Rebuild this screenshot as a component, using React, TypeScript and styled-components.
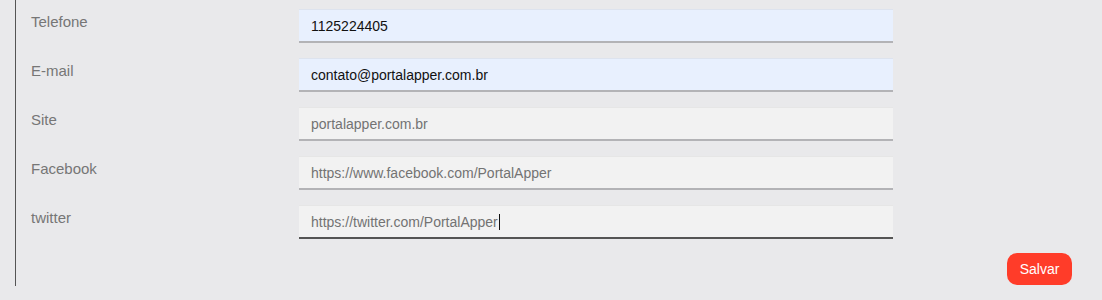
import styled, { createGlobalStyle } from "styled-components";

const GlobalStyle = createGlobalStyle`
  html, body {
    margin: 0;
    padding: 0;
    background: #e9e9eb;
    font-family: "Liberation Sans", Arial, sans-serif;
  }
`;

type Field = {
  label: string;
  value: string;
  autofill?: boolean;
  focused?: boolean;
};

const fields: Field[] = [
  { label: "Telefone", value: "1125224405", autofill: true },
  { label: "E-mail", value: "contato@portalapper.com.br", autofill: true },
  { label: "Site", value: "portalapper.com.br" },
  { label: "Facebook", value: "https://www.facebook.com/PortalApper" },
  { label: "twitter", value: "https://twitter.com/PortalApper", focused: true },
];

export default function App() {
  return (
    <Page>
      <GlobalStyle />
      <Panel>
        <Form>
          {fields.map((f) => (
            <Row key={f.label}>
              <Label>{f.label}</Label>
              <Input $autofill={f.autofill} $focused={f.focused}>
                {f.value}
                {f.focused && <Caret />}
              </Input>
            </Row>
          ))}
        </Form>
        <Actions>
          <SaveButton>Salvar</SaveButton>
        </Actions>
      </Panel>
    </Page>
  );
}

const Page = styled.div`
  height: 300px;
  padding-left: 15px;
  box-sizing: border-box;
`;

const Panel = styled.div`
  border-left: 1px solid #555;
  height: 286px;
  box-sizing: border-box;
  padding: 9px 30px 0 15px;
  display: flex;
  flex-direction: column;
`;

const Form = styled.div`
  display: flex;
  flex-direction: column;
  gap: 15px;
`;

const Row = styled.div`
  display: grid;
  grid-template-columns: 268px 594px;
  align-items: start;
`;

const Label = styled.div`
  font-size: 15px;
  line-height: 17px;
  color: #767676;
  padding-top: 4px;
`;

const Input = styled.div<{ $autofill?: boolean; $focused?: boolean }>`
  height: 34px;
  box-sizing: border-box;
  display: flex;
  align-items: center;
  padding: 0 12px;
  font-size: 14px;
  background: ${(p) => (p.$autofill ? "#e8f0fe" : "#f2f2f2")};
  color: ${(p) => (p.$autofill ? "#111" : "#737373")};
  border-top: 1px solid ${(p) => (p.$autofill ? "#dde3ee" : "#e6e6e6")};
  border-bottom: 2px solid ${(p) => (p.$focused ? "#555" : "#b3b3b6")};
`;

const Caret = styled.span`
  display: inline-block;
  width: 1px;
  height: 16px;
  background: #111;
  margin-left: 1px;
`;

const Actions = styled.div`
  display: flex;
  justify-content: flex-end;
  margin-top: 14px;
`;

const SaveButton = styled.button`
  border: none;
  background: #ff3c29;
  color: #fff;
  font-family: "Liberation Sans", Arial, sans-serif;
  font-size: 14px;
  width: 65px;
  height: 32px;
  border-radius: 10px;
  padding: 0;
`;
